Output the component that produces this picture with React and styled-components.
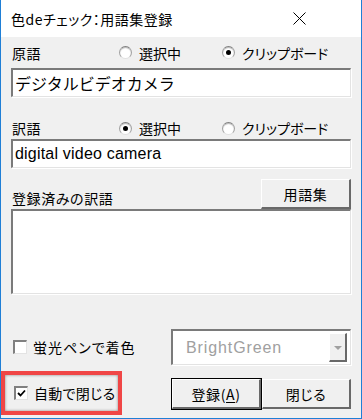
import React from "react";
import styled, { createGlobalStyle } from "styled-components";

const GlobalStyle = createGlobalStyle`
  html, body {
    margin: 0;
    padding: 0;
    background: #ffffff;
  }
  body {
    font-family: "Noto Sans CJK JP", "Liberation Sans", sans-serif;
    color: #000000;
  }
`;

const Window = styled.div`
  width: 362px;
  height: 419px;
  box-sizing: border-box;
  border: 1px solid #1f7fd6;
  border-top: none;
  background: #f0f0f0;
  display: flex;
  flex-direction: column;
  overflow: hidden;
`;

const TitleBar = styled.div`
  height: 37px;
  flex-shrink: 0;
  background: #ffffff;
  display: flex;
  align-items: center;
  justify-content: space-between;
  padding: 0 55px 0 10px;
`;

const Title = styled.span`
  font-size: 14px;
  font-feature-settings: "palt";
  letter-spacing: 0.5px;
  line-height: 1;
`;

const Body = styled.div`
  flex: 1;
  display: flex;
  flex-direction: column;
  padding: 0 10px 0 10px;
`;

const Row = styled.div`
  display: flex;
  align-items: ${(p) => p.align || "center"};
  height: ${(p) => p.h}px;
  padding-top: ${(p) => p.pt || 0}px;
  margin-top: ${(p) => p.mt || 0}px;
  box-sizing: border-box;
  flex-shrink: 0;
`;

const Label = styled.span`
  font-size: 14px;
  line-height: 20px;
  padding-left: 1px;
  width: ${(p) => (p.w ? p.w + "px" : "auto")};
  padding-bottom: ${(p) => p.pb || 0}px;
  font-feature-settings: "palt";
  letter-spacing: 0.6px;
  white-space: nowrap;
`;

const RadioOption = styled.label`
  display: flex;
  align-items: center;
  width: ${(p) => p.w}px;
  font-size: 14px;
  line-height: 20px;
  font-feature-settings: "palt";
  white-space: nowrap;
`;

const RadioCircle = styled.span`
  width: 13px;
  height: 13px;
  box-sizing: border-box;
  border-radius: 50%;
  border: 1px solid #a0a0a0;
  border-top-color: #808080;
  border-bottom-color: #e0e0e0;
  background: #ffffff;
  box-shadow: inset 0 1px 1px #b8b8b8;
  margin-right: 7px;
  display: flex;
  align-items: center;
  justify-content: center;
  &::after {
    content: "";
    width: 5px;
    height: 5px;
    border-radius: 50%;
    background: ${(p) => (p.checked ? "#000000" : "transparent")};
  }
`;

const Sunken = styled.div`
  box-sizing: border-box;
  height: ${(p) => p.h}px;
  background: #ffffff;
  border-top: 2px solid #7a7a7a;
  border-left: 2px solid #7a7a7a;
  border-right: 1px solid #e3e3e3;
  border-bottom: 1px solid #e3e3e3;
  box-shadow: 1px 1px 0 #ffffff;
  flex-shrink: 0;
`;

const TextField = styled(Sunken)`
  display: flex;
  align-items: center;
  padding-left: 2px;
  font-size: ${(p) => p.fs}px;
  font-family: ${(p) =>
    p.latin
      ? `"Liberation Sans", "Noto Sans CJK JP", sans-serif`
      : `"Noto Sans CJK JP", sans-serif`};
  letter-spacing: ${(p) => (p.latin ? "0.2px" : "0")};
`;

const Button = styled.button`
  box-sizing: border-box;
  width: ${(p) => p.w}px;
  height: ${(p) => p.h}px;
  margin-top: ${(p) => p.mt || 0}px;
  background: #f0f0f0;
  border-top: 1px solid #ffffff;
  border-left: 1px solid #ffffff;
  border-right: 2px solid #696969;
  border-bottom: 2px solid #696969;
  outline: ${(p) => (p.primary ? "1px solid #000000" : "none")};
  outline-offset: 0;
  font-family: "Noto Sans CJK JP", sans-serif;
  font-size: 14px;
  font-feature-settings: "palt";
  letter-spacing: 0.6px;
  color: #000000;
  padding: 0;
  display: flex;
  align-items: center;
  justify-content: center;
  flex-shrink: 0;
  u {
    text-decoration: underline;
    text-underline-offset: 2px;
  }
`;

const Spacer = styled.div`
  flex: 1;
`;

const CheckLabel = styled.label`
  display: flex;
  align-items: center;
  font-size: 14px;
  line-height: 20px;
  font-feature-settings: "palt";
  letter-spacing: ${(p) => p.ls || 1}px;
  padding-left: ${(p) => p.pl || 2}px;
  white-space: nowrap;
`;

const CheckBox = styled.span`
  width: 14px;
  height: 14px;
  box-sizing: border-box;
  background: #ffffff;
  border-top: 2px solid #808080;
  border-left: 2px solid #808080;
  border-right: 1px solid #e3e3e3;
  border-bottom: 1px solid #e3e3e3;
  margin-right: 6px;
  display: flex;
  align-items: center;
  justify-content: center;
  flex-shrink: 0;
`;

const Combo = styled(Sunken)`
  width: 180px;
  margin-left: auto;
  display: flex;
  align-items: center;
  justify-content: space-between;
  padding: 0 3px 0 13px;
`;

const ComboText = styled.span`
  font-family: "Liberation Sans", sans-serif;
  font-size: 16px;
  letter-spacing: 0.9px;
  color: #a0a0a0;
`;

const ComboArrow = styled.span`
  box-sizing: border-box;
  width: 18px;
  height: 29px;
  background: #f0f0f0;
  border-top: 1px solid #ffffff;
  border-left: 1px solid #ffffff;
  border-right: 2px solid #696969;
  border-bottom: 2px solid #696969;
  display: flex;
  align-items: center;
  justify-content: center;
  &::after {
    content: "";
    border-left: 4px solid transparent;
    border-right: 4px solid transparent;
    border-top: 4px solid #a0a0a0;
    margin-top: 2px;
  }
`;

const Highlight = styled.div`
  box-sizing: border-box;
  width: 121px;
  height: 44px;
  margin-left: -10px;
  margin-top: -4px;
  border: 4px solid #f04646;
  box-shadow: inset 0 0 3px rgba(0, 0, 0, 0.45);
  display: flex;
  align-items: center;
  padding-left: 7px;
  flex-shrink: 0;
`;

const ButtonGroup = styled.div`
  display: flex;
  margin-left: auto;
  gap: 1px;
`;

const CloseIcon = () => (
  <svg width="13" height="13" viewBox="0 0 13 13">
    <path d="M0.5 0.5 L12.5 12.5 M12.5 0.5 L0.5 12.5" stroke="#000" strokeWidth="1" />
  </svg>
);

const CheckMark = () => (
  <svg width="9" height="9" viewBox="0 0 9 9">
    <path d="M1 4 L3.5 6.5 L8 1.5" stroke="#000" strokeWidth="1.8" fill="none" />
  </svg>
);

export default function App() {
  return (
    <>
      <GlobalStyle />
      <Window>
        <TitleBar>
          <Title>色deチェック：用語集登録</Title>
          <CloseIcon />
        </TitleBar>
        <Body>
          <Row h={31}>
            <Label w={107}>原語</Label>
            <RadioOption w={103}>
              <RadioCircle />
              選択中
            </RadioOption>
            <RadioOption w={120}>
              <RadioCircle checked />
              クリップボード
            </RadioOption>
          </Row>
          <TextField h={29} fs={16}>
            デジタルビデオカメラ
          </TextField>
          <Row h={42} pt={20}>
            <Label w={107}>訳語</Label>
            <RadioOption w={103}>
              <RadioCircle checked />
              選択中
            </RadioOption>
            <RadioOption w={120}>
              <RadioCircle />
              クリップボード
            </RadioOption>
          </Row>
          <TextField h={29} fs={16} latin>
            digital video camera
          </TextField>
          <Row h={41} align="flex-end">
            <Label pb={1}>登録済みの訳語</Label>
            <Spacer />
            <Button w={90} h={30}>
              用語集
            </Button>
          </Row>
          <Sunken h={85} />
          <Row h={36} mt={35}>
            <CheckLabel>
              <CheckBox />
              蛍光ペンで着色
            </CheckLabel>
            <Combo h={36}>
              <ComboText>BrightGreen</ComboText>
              <ComboArrow />
            </Combo>
          </Row>
          <Row h={44} mt={10} align="flex-start">
            <Highlight>
              <CheckLabel pl={0} ls={0.3}>
                <CheckBox>
                  <CheckMark />
                </CheckBox>
                自動で閉じる
              </CheckLabel>
            </Highlight>
            <ButtonGroup>
              <Button w={89} h={30} mt={4} primary>
                登録(<u>A</u>)
              </Button>
              <Button w={89} h={30} mt={4}>
                閉じる
              </Button>
            </ButtonGroup>
          </Row>
        </Body>
      </Window>
    </>
  );
}
